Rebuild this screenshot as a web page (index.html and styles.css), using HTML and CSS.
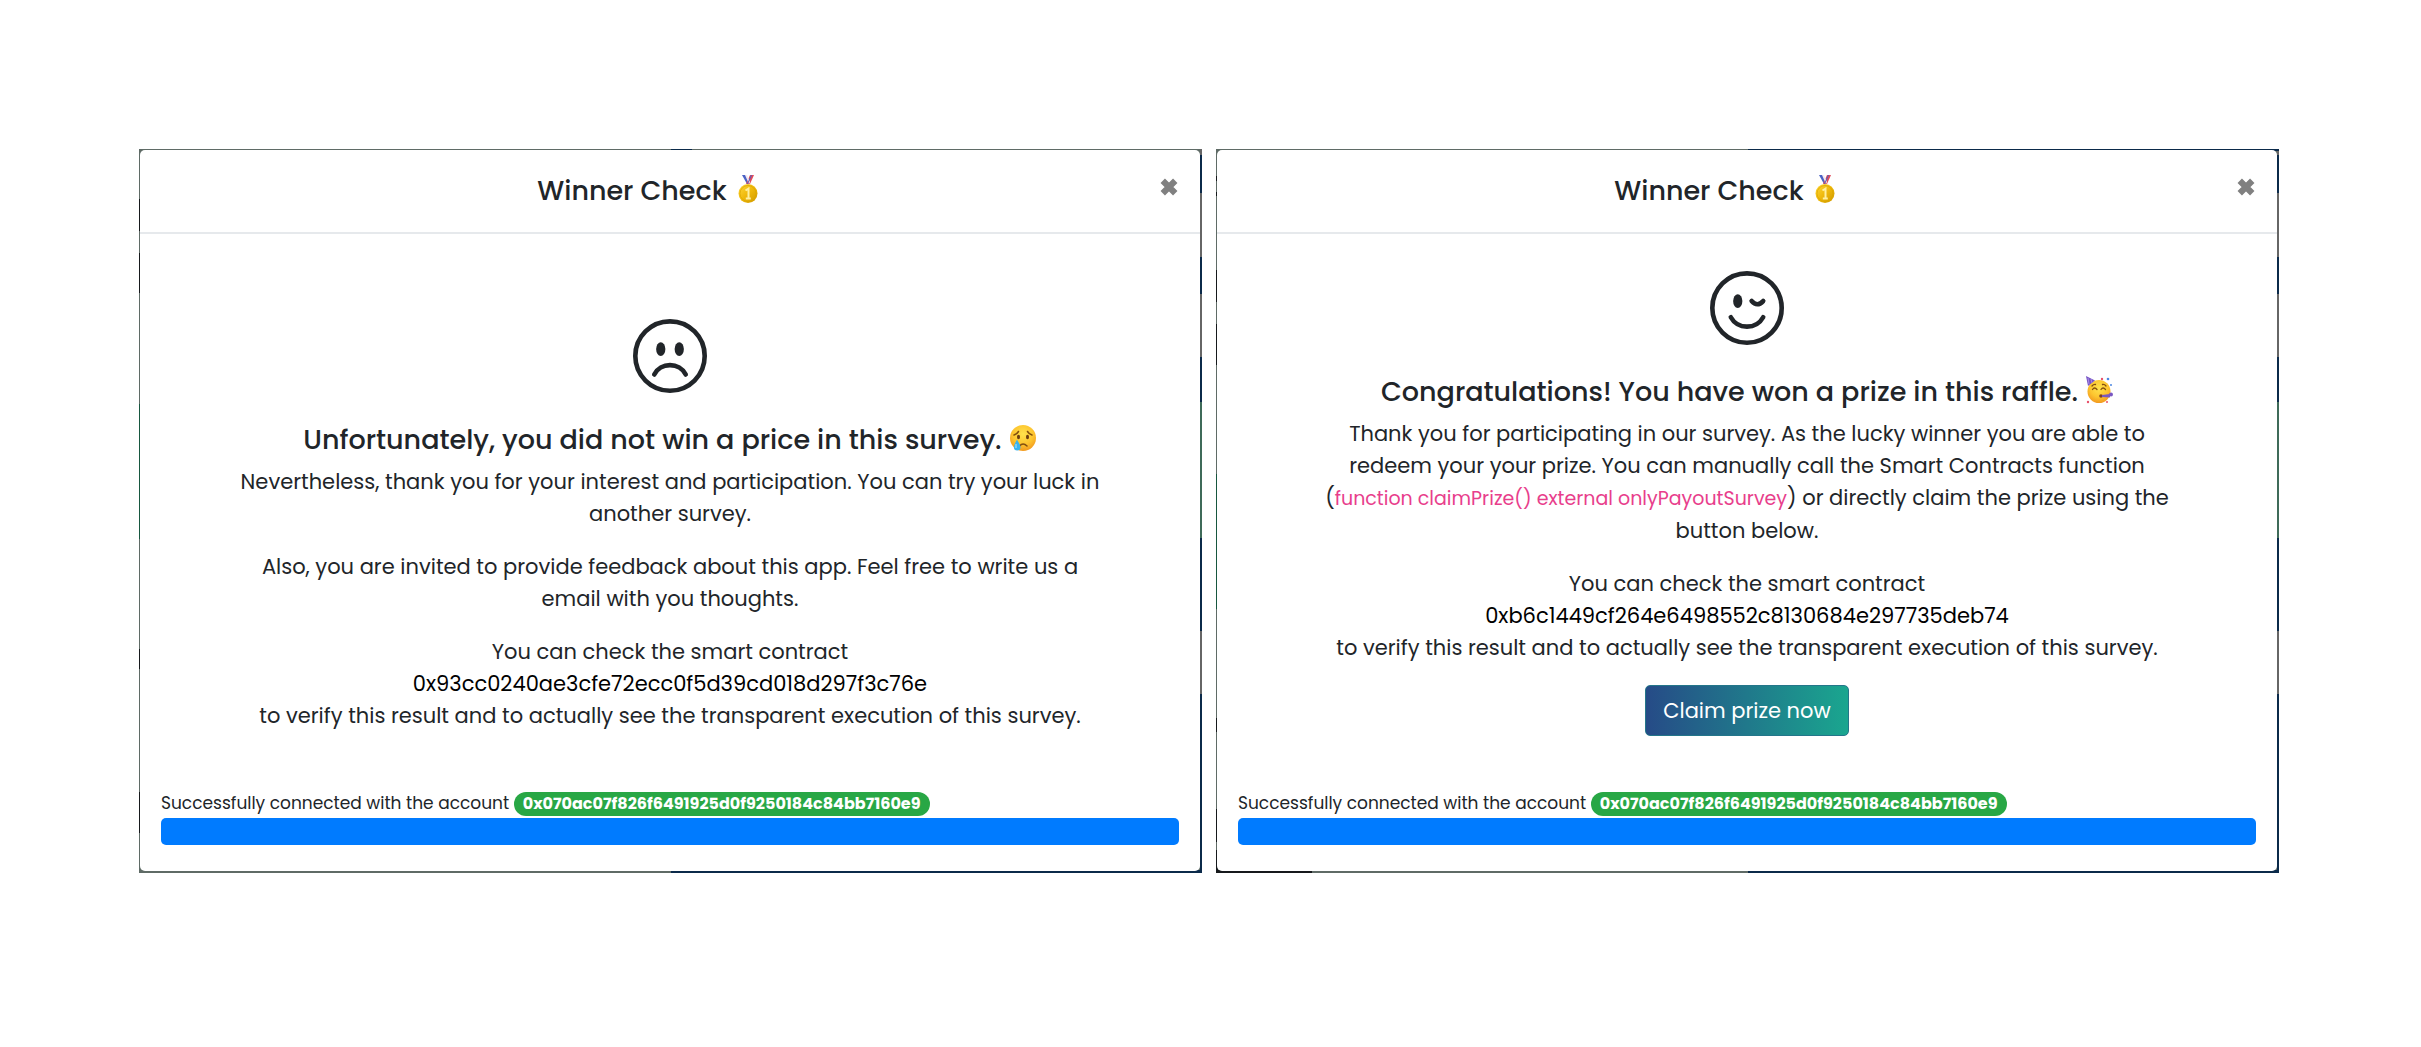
FILE: index.html
```html
<!DOCTYPE html>
<html lang="en">
<head>
<meta charset="utf-8">
<title>Winner Check</title>
<link rel="stylesheet" href="styles.css">
</head>
<body>
<svg class="defs" aria-hidden="true">
  <defs>
    <linearGradient id="gold" x1="0" y1="0" x2="1" y2="1"><stop offset="0" stop-color="#ffd93b"/><stop offset=".5" stop-color="#efb90c"/><stop offset="1" stop-color="#cf9800"/></linearGradient>
    <radialGradient id="skin" cx=".5" cy=".35" r=".65"><stop offset="0" stop-color="#ffe34d"/><stop offset=".6" stop-color="#fdc52f"/><stop offset="1" stop-color="#f29a1f"/></radialGradient>
    <symbol id="medal" viewBox="0 0 28 28">
      <path d="M8 0h4l4 9h-3z" fill="#4b62c4"/><path d="M20 0h-4l-4 9h4z" fill="#e24b5a"/><path d="M11 0h2l3 7-1 2z" fill="#f5e9f0"/><path d="M17 0h1l-4 9h-1z" fill="#4b62c4"/>
      <circle cx="14" cy="18.500" r="9.500" fill="url(#gold)"/><circle cx="14" cy="18.500" r="8" fill="none" stroke="#d9a500" stroke-width=".7"/>
      <path d="M11.500 15.500l3-2v10M11.800 23.500h5" fill="none" stroke="#fff0a0" stroke-width="2"/>
    </symbol>
  </defs>
</svg>
<main class="page">
  <section class="frame frame-left">
    <div class="dialog">
      <header class="dialog-header">
        <h1 class="title">Winner Check <svg class="emoji" aria-hidden="true"><use href="#medal"/></svg></h1>
        <button class="close" type="button" aria-label="Close"><svg viewBox="0 0 16 16"><path d="M3 3l10 10M13 3L3 13"/></svg></button>
      </header>
      <div class="dialog-body body-lost">
        <svg class="face" viewBox="0 0 16 16" aria-hidden="true">
          <circle class="line" cx="8" cy="8" r="7.500"/>
          <path class="line" d="M4.600 12C5.900 9.300 10.100 9.300 11.400 12"/>
          <ellipse cx="6" cy="6.500" rx="1" ry="1.500"/><ellipse cx="10" cy="6.500" rx="1" ry="1.500"/>
        </svg>
        <h2 class="headline">Unfortunately, you did not win a price in this survey.
          <svg class="emoji" viewBox="0 0 28 28" aria-hidden="true">
            <circle cx="14" cy="14" r="13" fill="url(#skin)"/>
            <path d="M5 11q3-1 4.500-3.500M23 11q-3-1-4.500-3.500M10.500 22q3.500-4 7.500 0" fill="none" stroke="#83500f" stroke-width="1.500" stroke-linecap="round"/>
            <ellipse cx="9.500" cy="13" rx="1.500" ry="2.200" fill="#6b3d10"/><ellipse cx="18.500" cy="13" rx="1.500" ry="2.200" fill="#6b3d10"/>
            <path d="M8 15.500c2 4 3.500 5.500 3.500 7.700a3.300 3.300 0 0 1-6.600 0c0-2.200 1.500-4.200 3.100-7.700z" fill="#38b2ef"/><path d="M7 20v4" stroke="#b5e6fc"/>
          </svg></h2>
        <p>Nevertheless, thank you for your interest and participation. You can try your luck in another survey.</p>
        <p>Also, you are invited to provide feedback about this app. Feel free to write us a email with you thoughts.</p>
        <p>You can check the smart contract<br><a class="contract" href="#contract">0x93cc0240ae3cfe72ecc0f5d39cd018d297f3c76e</a><br>to verify this result and to actually see the transparent execution of this survey.</p>
      </div>
      <footer class="status">
        <span>Successfully connected with the account</span> <span class="badge">0x070ac07f826f6491925d0f9250184c84bb7160e9</span>
        <div class="progress" role="progressbar" aria-label="Progress" aria-valuenow="100" aria-valuemin="0" aria-valuemax="100"></div>
      </footer>
    </div>
  </section>
  <section class="frame frame-right">
    <div class="dialog">
      <header class="dialog-header">
        <h1 class="title">Winner Check <svg class="emoji" aria-hidden="true"><use href="#medal"/></svg></h1>
        <button class="close" type="button" aria-label="Close"><svg viewBox="0 0 16 16"><path d="M3 3l10 10M13 3L3 13"/></svg></button>
      </header>
      <div class="dialog-body body-won">
        <svg class="face" viewBox="0 0 16 16" aria-hidden="true">
          <circle class="line" cx="8" cy="8" r="7.500"/>
          <path class="line" d="M4.500 10C6 12.700 10 12.700 11.500 10M9 6.500Q10.200 7.900 11.500 6.500"/>
          <ellipse cx="6" cy="6.500" rx="1" ry="1.500"/>
        </svg>
        <h2 class="headline">Congratulations! You have won a prize in this raffle.
          <svg class="emoji" viewBox="0 0 28 28" aria-hidden="true">
            <circle cx="14" cy="15.500" r="11.500" fill="url(#skin)"/>
            <path d="M1 0l9 4.500-7 5.500z" fill="#7655c4"/><path d="M3 2l1 6M6 3l1 4" stroke="#a98be8"/>
            <path d="M7.500 13.500q2-3 4.500 0M16 13.500q2-3 4.500 0M7 10q1.500-1.800 3.500-1.500M17.500 8.500q2-.5 3.500 1.500" fill="none" stroke="#83500f" stroke-width="1.300" stroke-linecap="round"/>
            <circle cx="16" cy="20" r="1.800" fill="#7d3e24"/><path d="M17 19l8-1v3.500l-8-.5z" fill="#7a58c2"/><circle cx="26" cy="18.500" r="2" fill="#7a58c2"/>
            <g fill="#e8506a"><circle cx="17" cy="3" r="1.200"/><circle cx="3" cy="26" r="1.200"/><circle cx="22" cy="26" r="1"/></g><g fill="#4d87e2"><circle cx="23" cy="3" r="1.300"/><circle cx="26" cy="9" r="1"/></g>
          </svg></h2>
        <p>Thank you for participating in our survey. As the lucky winner you are able to redeem your your prize. You can manually call the Smart Contracts function (<code>function claimPrize() external onlyPayoutSurvey</code>) or directly claim the prize using the button below.</p>
        <p>You can check the smart contract<br><a class="contract" href="#contract">0xb6c1449cf264e6498552c8130684e297735deb74</a><br>to verify this result and to actually see the transparent execution of this survey.</p>
        <button class="claim" type="button">Claim prize now</button>
      </div>
      <footer class="status">
        <span>Successfully connected with the account</span> <span class="badge">0x070ac07f826f6491925d0f9250184c84bb7160e9</span>
        <div class="progress" role="progressbar" aria-label="Progress" aria-valuenow="100" aria-valuemin="0" aria-valuemax="100"></div>
      </footer>
    </div>
  </section>
</main>
</body>
</html>
```
FILE: styles.css
```css
* { box-sizing: border-box; }
body {
  margin: 0;
  background: #fff;
  color: #212529;
  font: 400 21px/32px Poppins, Inter, "Liberation Sans", sans-serif;
}
.defs { position: absolute; width: 0; height: 0; }
.page {
  display: grid;
  grid-template-columns: 1fr 1fr;
  gap: 14px;
  padding: 149px 142px 149px 139px;
}

/* The thin edge shows pieces of the dimmed page behind each dialog. */
.frame {
  --dim: #5f6b66;
  --gray: #666;
  --navy: #0b2a4a;
  --ink: #16191c;
  --green: #17573f;
  --right-edge: linear-gradient(
    var(--gray) 0 6px, var(--navy) 6px 44px, var(--gray) 44px 108px, var(--navy) 108px 145px,
    var(--gray) 145px 208px, var(--navy) 208px 253px, #3f6b59 253px 389px, var(--navy) 389px 482px,
    var(--gray) 482px 545px, var(--navy) 545px) 100% 0 / 2px 100% no-repeat;
  display: flex;
  padding: 1px 2px 2px 1px;
}
.frame-left {
  background:
    linear-gradient(90deg, transparent 50%, var(--navy) 50% 52%, transparent 52%) 0 0 / 100% 2px no-repeat,
    linear-gradient(var(--navy), var(--navy)) 100% 100% / 50% 3px no-repeat,
    var(--right-edge),
    linear-gradient(var(--dim) 0 50px, var(--ink) 50px 82px, var(--dim) 82px 104px, var(--ink) 104px 144px,
      var(--dim) 144px 255px, var(--green) 255px 390px, var(--dim) 390px 500px, var(--ink) 500px 520px,
      var(--dim) 520px 643px, var(--ink) 643px 684px, var(--dim) 684px) 0 0 / 2px 100% no-repeat,
    var(--dim);
}
.frame-right {
  background:
    linear-gradient(var(--navy), var(--navy)) 100% 0 / 50% 2px no-repeat,
    linear-gradient(90deg, var(--ink) 9%, var(--dim) 9% 50%, var(--navy) 50%) 0 100% / 100% 3px no-repeat,
    var(--right-edge),
    linear-gradient(var(--dim) 0 27px, var(--ink) 27px 32px, var(--dim) 32px 43px, var(--ink) 43px 47px,
      var(--dim) 47px 121px, var(--ink) 121px 153px, var(--dim) 153px 175px, var(--ink) 175px 216px,
      var(--dim) 216px 325px, var(--green) 325px 460px, var(--dim) 460px 569px, var(--ink) 569px 583px,
      var(--dim) 583px 660px, var(--ink) 660px 693px, var(--dim) 693px 701px, var(--ink) 701px) 0 0 / 2px 100% no-repeat,
    var(--dim);
}
.dialog {
  flex: 1;
  display: flex;
  flex-direction: column;
  min-height: 721px;
  background: #fff;
  border-radius: 5px;
}
.dialog-header {
  display: flex;
  align-items: flex-start;
  padding: 21px;
  border-bottom: 2px solid #e6e9ec;
}
.title, .headline { margin: 0; font-size: 27px; font-weight: 500; line-height: 40px; }
.title { flex: 1; text-align: center; }
.emoji { width: 28px; height: 28px; vertical-align: -3px; }
.close { margin: 6px 0 0 21px; padding: 0; border: 0; background: none; }
.close svg { display: block; width: 20px; height: 20px; fill: none; stroke: #808080; stroke-width: 5; }
.dialog-body {
  flex: 1;
  display: flex;
  flex-direction: column;
  align-items: center;
  padding: 0 94px 21px;
  text-align: center;
}
.body-lost { padding-top: 85px; }
.body-won { padding-top: 37px; }
.face { width: 74px; height: 74px; fill: #212529; }
.face .line { fill: none; stroke: #212529; stroke-linecap: round; }
.headline { margin: 27px 0 6px; }
.dialog-body p { margin: 0 0 21px; }
.contract { color: #000; text-decoration: none; }
code { color: #e83e8c; font-family: inherit; font-size: 19px; }
.claim {
  height: 51px;
  padding: 0 17px;
  border: 1px solid #24768a;
  border-radius: 5px;
  background: linear-gradient(90deg, #264b87, #1aa68f);
  color: #fff;
  font: inherit;
}
.status { padding: 0 21px 26px; font-size: 17px; line-height: 30px; }
.badge {
  display: inline-block;
  padding: 0 9px;
  border-radius: 12px;
  background: #28a745;
  color: #fff;
  font-size: 16px;
  font-weight: 700;
  line-height: 24px;
}
.progress { height: 27px; border-radius: 5px; background: #007bff; }
```
